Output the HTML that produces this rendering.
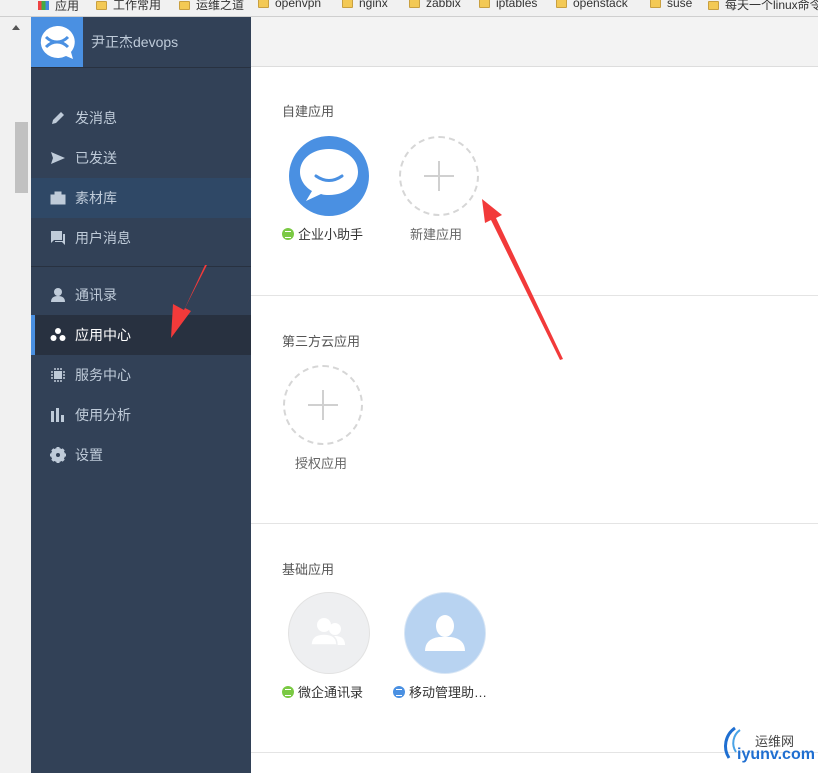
<!DOCTYPE html>
<html><head><meta charset="utf-8"><style>
*{margin:0;padding:0;box-sizing:border-box}
body{width:818px;height:773px;overflow:hidden;background:#fff;font-family:"Liberation Sans","Noto Sans CJK SC",sans-serif;position:relative}
.abs{position:absolute}
.bm{top:0;left:0;width:818px;height:17px;background:#f1f1f1;border-bottom:1px solid #cfcfcf;font-size:12px;color:#333;white-space:nowrap;overflow:hidden}
.bm span{position:absolute;top:-4px}
.fold{display:inline-block;width:11px;height:9px;background:#f3c955;border:1px solid #c9a040;border-radius:1px;margin-right:6px;vertical-align:-1px}
.side{left:31px;top:17px;width:220px;height:756px;background:#324157}
.mi{position:absolute;left:0;width:220px;height:40px;color:#bfcbd9;font-size:14px;line-height:40px;padding-left:44px}
.mi svg{position:absolute;left:19px;top:12px}
.sec{font-size:13px;color:#555}
.lbl{font-size:13px;color:#333;white-space:nowrap}
.dot{display:inline-block;width:12px;height:12px;border-radius:50%;background:#7ac943;vertical-align:-1px;margin-right:4px;position:relative}
.dot:after{content:"";position:absolute;left:3px;top:3px;width:6px;height:5px;border-top:1.5px solid #fff;border-bottom:1.5px solid #fff}
.dash{width:80px;height:80px;border:2px dashed #d6d6d6;border-radius:50%}
.dash:before,.dash:after{content:"";position:absolute;background:#d0d0d0}
.dash:before{left:23px;top:37px;width:30px;height:2px}
.dash:after{left:37px;top:23px;width:2px;height:30px}
.hr{left:251px;width:567px;height:1px;background:#e4e4e4}
</style></head><body>
<div class="abs bm">
<span style="left:38px;top:-3px"><b style="display:inline-block;width:11px;height:9px;background:linear-gradient(90deg,#e44 33%,#4a4 33% 66%,#48d 66%);margin-right:6px"></b>应用</span>
<span style="left:96px"><i class="fold"></i>工作常用</span>
<span style="left:179px"><i class="fold"></i>运维之道</span>
<span style="left:258px"><i class="fold"></i>openvpn</span>
<span style="left:342px"><i class="fold"></i>nginx</span>
<span style="left:409px"><i class="fold"></i>zabbix</span>
<span style="left:479px"><i class="fold"></i>iptables</span>
<span style="left:556px"><i class="fold"></i>openstack</span>
<span style="left:650px"><i class="fold"></i>suse</span>
<span style="left:708px"><i class="fold"></i>每天一个linux命令</span>
</div>
<div class="abs" style="left:0;top:17px;width:31px;height:756px;background:#f1f1f1"></div>
<div class="abs" style="left:12px;top:25px;width:0;height:0;border-left:4px solid transparent;border-right:4px solid transparent;border-bottom:5px solid #555"></div>
<div class="abs" style="left:15px;top:122px;width:13px;height:71px;background:#c1c1c1"></div>
<div class="abs" style="left:251px;top:17px;width:567px;height:50px;background:#f3f3f3;border-bottom:1px solid #ddd"></div>
<div class="abs side">
 <div class="abs" style="left:0;top:0;width:52px;height:50px;background:#4a90e2">
  <svg width="52" height="50" viewBox="0 0 52 50"><path d="M26 9a17 16 0 1 0 9 30l7 3-2-7a17 16 0 0 0-14-26z" fill="#fff"/><path d="M15 20q5 5 11 5 6 0 11-5M15 30q5-5 11-5 6 0 11 5" stroke="#4a90e2" stroke-width="3" fill="none"/></svg>
 </div>
 <div class="abs" style="left:60px;top:0;line-height:50px;color:#bfcbd9;font-size:14px">尹正杰devops</div>
 <div class="abs" style="left:0;top:50px;width:220px;height:1px;background:#283140"></div>
 <div class="mi" style="top:81px"><svg width="16" height="16"><path d="M2 14l1-4 8-8 3 3-8 8z" fill="#bfcbd9"/></svg>发消息</div>
 <div class="mi" style="top:121px"><svg width="16" height="16"><path d="M1 2l14 6-14 6 2-6z" fill="#bfcbd9"/></svg>已发送</div>
 <div class="mi" style="top:161px;background:#2f4866"><svg width="16" height="16"><path d="M1 5h14v9H1zM5 5V2h6v3" fill="#bfcbd9" stroke="#bfcbd9"/></svg>素材库</div>
 <div class="mi" style="top:201px"><svg width="16" height="16"><path d="M1 1h11v9H4l-3 3zM13 4h2v11l-3-3H5v-1h8z" fill="#bfcbd9"/></svg>用户消息</div>
 <div class="abs" style="left:0;top:249px;width:220px;height:1px;background:#283140"></div>
 <div class="mi" style="top:258px"><svg width="16" height="16"><circle cx="8" cy="5" r="4" fill="#bfcbd9"/><path d="M1 15q0-6 7-6t7 6z" fill="#bfcbd9"/></svg>通讯录</div>
 <div class="mi" style="top:298px;background:#283140;color:#fff"><div class="abs" style="left:0;top:0;width:4px;height:40px;background:#4a90e2"></div><svg width="16" height="16"><circle cx="8" cy="4" r="3" fill="#fff"/><circle cx="3.5" cy="11" r="3" fill="#fff"/><circle cx="12.5" cy="11" r="3" fill="#fff"/></svg>应用中心</div>
 <div class="mi" style="top:338px"><svg width="16" height="16"><rect x="4" y="4" width="8" height="8" fill="#bfcbd9"/><path d="M5 1v2M8 1v2M11 1v2M5 13v2M8 13v2M11 13v2M1 5h2M1 8h2M1 11h2M13 5h2M13 8h2M13 11h2" stroke="#bfcbd9" stroke-width="1.5"/></svg>服务中心</div>
 <div class="mi" style="top:378px"><svg width="16" height="16"><path d="M1 4h3v11H1zM6 1h3v14H6zM11 8h3v7h-3z" fill="#bfcbd9"/></svg>使用分析</div>
 <div class="mi" style="top:418px"><svg width="16" height="16"><circle cx="8" cy="8" r="5" fill="none" stroke="#bfcbd9" stroke-width="4"/><path d="M8 0v16M0 8h16M2.3 2.3l11.4 11.4M13.7 2.3L2.3 13.7" stroke="#bfcbd9" stroke-width="3"/><circle cx="8" cy="8" r="2" fill="#324157"/></svg>设置</div>
</div>
<div class="abs sec" style="left:282px;top:101px">自建应用</div>
<div class="abs" style="left:289px;top:136px;width:80px;height:80px;border-radius:50%;background:#4a90e2">
 <svg width="80" height="80"><path d="M40 13c-17 0-29 10-29 23 0 8 5 15 12 19l-6 10 15-7c3 1 5 1 8 1 17 0 29-10 29-23S57 13 40 13z" fill="#fff"/><path d="M27 40q13 9 26 0" stroke="#4a90e2" stroke-width="3" fill="none" stroke-linecap="round"/></svg>
</div>
<div class="abs lbl" style="left:282px;top:224px"><i class="dot"></i>企业小助手</div>
<div class="abs dash" style="left:399px;top:136px"></div>
<div class="abs lbl" style="left:410px;top:224px;color:#666">新建应用</div>
<div class="abs hr" style="top:295px"></div>
<div class="abs sec" style="left:282px;top:331px">第三方云应用</div>
<div class="abs dash" style="left:283px;top:365px"></div>
<div class="abs lbl" style="left:295px;top:453px;color:#666">授权应用</div>
<div class="abs hr" style="top:523px"></div>
<div class="abs sec" style="left:282px;top:559px">基础应用</div>
<div class="abs" style="left:288px;top:592px;width:82px;height:82px;border-radius:50%;background:#eeeff1;border:1px solid #e2e2e2">
 <svg width="80" height="80"><circle cx="46" cy="36" r="6" fill="#fff"/><path d="M36 52q0-9 10-9t10 9z" fill="#fff"/><circle cx="35" cy="32" r="7" fill="#fff"/><path d="M22 52q0-11 13-11t13 11z" fill="#fff" stroke="#eeeff1" stroke-width="1.5"/></svg>
</div>
<div class="abs lbl" style="left:282px;top:682px"><i class="dot"></i>微企通讯录</div>
<div class="abs" style="left:404px;top:592px;width:82px;height:82px;border-radius:50%;background:#b8d3f1;border:1px solid #d8e6f5">
 <svg width="80" height="80"><ellipse cx="40" cy="33" rx="9" ry="11" fill="#fff"/><path d="M20 58q0-12 14-14h12q14 2 14 14z" fill="#fff"/></svg>
</div>
<div class="abs lbl" style="left:393px;top:682px"><i class="dot" style="background:#4a90e2"></i>移动管理助…</div>
<div class="abs hr" style="top:752px"></div>
<svg class="abs" style="left:0;top:0" width="818" height="773">
 <path d="M205 265L184 310l-11-6-2 34 20-27-6-3 22-43z" fill="#f23a3a"/>
 <path d="M482 199l3 24 6-3 69 140 3-1-67-141 6-3z" fill="#f23a3a"/>
 <path d="M735 728a22 22 0 0 0-6 30" stroke="#1f6fd1" stroke-width="3" fill="none"/>
 <path d="M740 730a16 16 0 0 0-4 22" stroke="#4aa3e6" stroke-width="2" fill="none"/>
</svg>
<div class="abs" style="left:755px;top:731px;font-size:13px;color:#444">运维网</div>
<div class="abs" style="left:737px;top:746px;font-size:16px;color:#1f6fd1;font-weight:bold">iyunv.com</div>
</body></html>
